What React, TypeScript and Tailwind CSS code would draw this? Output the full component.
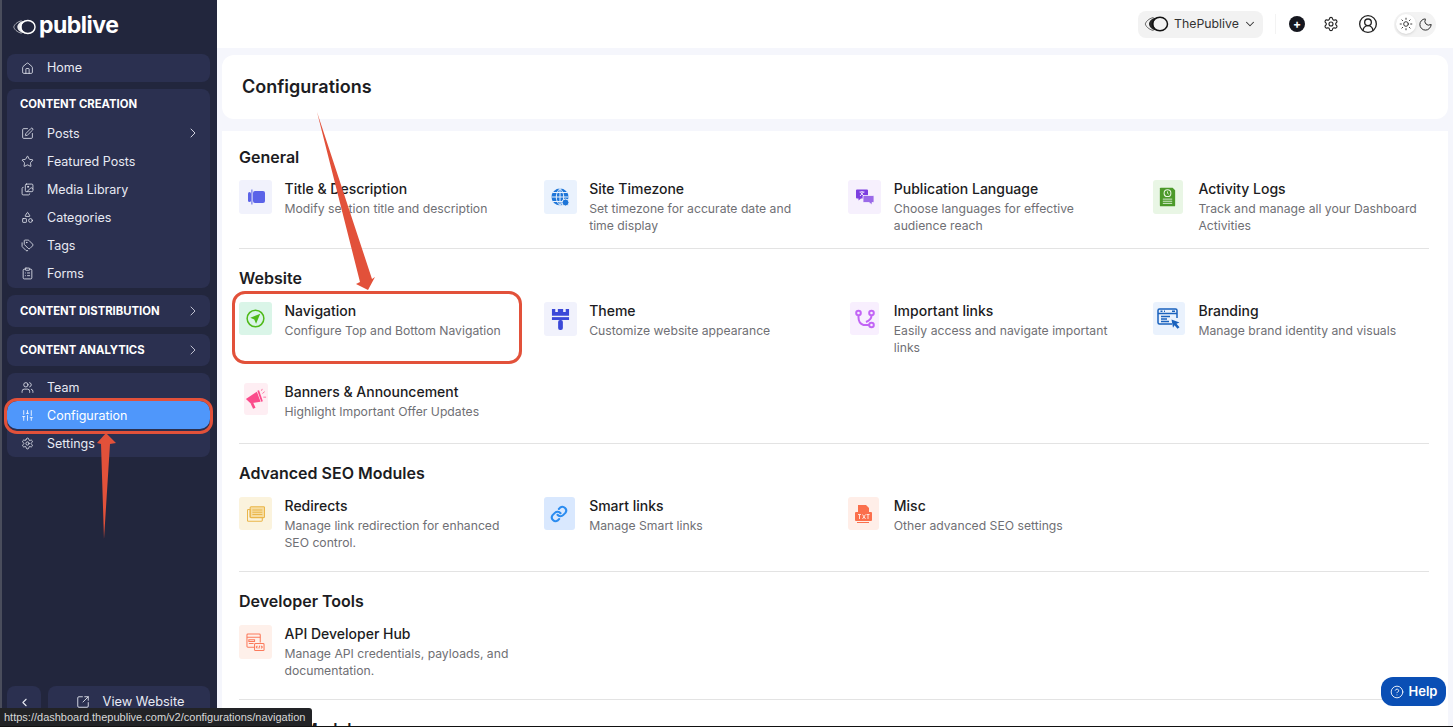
import type { ReactNode } from "react";
import {
  ChevronDown,
  ChevronLeft,
  ChevronRight,
  CircleHelp,
  CircleUserRound,
  ClipboardList,
  House,
  Images,
  Moon,
  Settings,
  Shapes,
  SlidersVertical,
  SquareArrowOutUpRight,
  SquarePen,
  Star,
  Sun,
  Tags,
  Users,
} from "lucide-react";

const font = { fontFamily: "Inter, 'Noto Sans', sans-serif" };

type Item = {
  title: string;
  desc: string;
  box: string;
  icon: ReactNode;
};

/* ---------------- coloured tile icons ---------------- */

const TitleIcon = () => (
  <svg viewBox="0 0 20 20" className="w-[20px] h-[20px]" fill="#5b63e8">
    <rect x="7" y="4" width="12" height="12" rx="2" />
    <rect x="2" y="5" width="3" height="10" rx="1.5" />
    <rect x="5.4" y="2.5" width="1" height="15" />
  </svg>
);
const GlobeIcon = () => (
  <svg viewBox="0 0 20 20" className="w-[20px] h-[20px]">
    <circle cx="10" cy="10" r="8.5" fill="#1f76d8" />
    <path d="M1.5 10h17M10 1.5v17M3 5.5h14M3 14.500h14M10 1.500c-5 5-5 12 0 17M10 1.500c5 5 5 12 0 17" stroke="#eaf2fd" strokeWidth="1" fill="none" />
    <circle cx="15.500" cy="15.500" r="3.500" fill="#1f76d8" stroke="#eaf2fd" />
  </svg>
);
const LanguageIcon = () => (
  <svg viewBox="0 0 20 20" className="w-[20px] h-[20px]">
    <path d="M1 3.500a1 1 0 0 1 1-1h10a1 1 0 0 1 1 1v7a1 1 0 0 1-1 1H6l-2.500 2v-2H2a1 1 0 0 1-1-1z" fill="#7c3fe0" />
    <path d="M8 8.500h10a1 1 0 0 1 1 1v5a1 1 0 0 1-1 1h-1v2.500l-3-2.500H8z" fill="#9a6ae8" stroke="#f6f0fd" strokeWidth="0.8" />
    <path d="M4.500 5h5M7 4v1M5 9l3.500-4M5.500 5.500L9 9" stroke="#f6f0fd" strokeWidth="0.9" fill="none" />
  </svg>
);
const ActivityIcon = () => (
  <svg viewBox="0 0 20 24" className="w-[17px] h-[22px]">
    <path d="M2 1h14l3 3v18a1 1 0 0 1-1 1H2a1 1 0 0 1-1-1V2a1 1 0 0 1 1-1z" fill="#4c9a2a" />
    <circle cx="10" cy="7.500" r="4" fill="none" stroke="#e9f6e5" strokeWidth="1.200" />
    <path d="M10 5.500v2.200l1.500 1M4.500 14.500h11M4.500 17h11M4.500 19.500h11" stroke="#e9f6e5" strokeWidth="1" fill="none" />
  </svg>
);
const NavIcon = () => (
  <svg viewBox="0 0 20 20" className="w-[19px] h-[19px]">
    <circle cx="10" cy="10" r="8.800" fill="none" stroke="#4fba1a" strokeWidth="1.600" />
    <path d="M15 5L4.500 9.200l4.200 1.900 1.900 4.400z" fill="#4fba1a" />
  </svg>
);
const ThemeIcon = () => (
  <svg viewBox="0 0 20 24" className="w-[19px] h-[23px]" fill="#3b49d8">
    <path d="M1 1h3.500v3h2.700V1h5.600v3h2.700V1H19v7H1z" />
    <rect x="1" y="9.500" width="18" height="3" />
    <rect x="7.500" y="12.500" width="5" height="10.500" rx="2" />
  </svg>
);
const LinksIcon = () => (
  <svg viewBox="0 0 20 20" className="w-[20px] h-[20px]" fill="none" stroke="#c264f5" strokeWidth="2">
    <circle cx="3.500" cy="4" r="2.300" />
    <circle cx="16.500" cy="4" r="2.300" />
    <circle cx="16.500" cy="16" r="2.300" />
    <path d="M3.500 6.500v2c0 4 2 6.500 5 7.500h5.500M16.500 6.500c0 3-2 5-5.500 6.500" />
  </svg>
);
const BrandingIcon = () => (
  <svg viewBox="0 0 24 22" className="w-[24px] h-[22px]" fill="none" stroke="#1a62bd" strokeWidth="1.500">
    <path d="M15 16H2.500a1.500 1.500 0 0 1-1.500-1.500v-12A1.500 1.500 0 0 1 2.500 1h16A1.500 1.500 0 0 1 20 2.500V10" />
    <path d="M1 5.500h19" />
    <path d="M3.500 3.300h2M7 3.300h1M15 3.300h3M4 8.500h9M4 11h6M4 13.500h8" />
    <path d="M14.500 11.500l8 3-3 1.200 3 3.500-2 1.500-3-3.500-1.500 2.500z" fill="#1a62bd" stroke="none" />
  </svg>
);
const BannerIcon = () => (
  <svg viewBox="0 0 24 24" className="w-[22px] h-[22px]" fill="#fb4b8b">
    <path d="M1 12l12-8 4 11-11 1.500z" />
    <path d="M13.500 3l1.800-.6 4.200 12-1.800.6z" />
    <path d="M6 16.500l3-.4 2.500 5.400-2.700 1z" />
    <path d="M19 6l2.500-2M20 10h3M18 3l.8-2" stroke="#fb4b8b" strokeWidth="0.800" fill="none" />
  </svg>
);
const RedirectIcon = () => (
  <svg viewBox="0 0 20 20" className="w-[18px] h-[18px]" fill="none" stroke="#eab64a" strokeWidth="1.200">
    <rect x="3.500" y="2" width="16" height="12" rx="1" fill="#f6dca0" />
    <path d="M3.500 14v-9H1.500a1 1 0 0 0-1 1v11a1 1 0 0 0 1 1H16a1 1 0 0 0 1-1v-3" />
    <path d="M6 5.500h11M6 8h11M6 10.500h11" />
  </svg>
);
const SmartIcon = () => (
  <svg viewBox="0 0 24 24" className="w-[18px] h-[18px]" fill="none" stroke="#2b8cf0" strokeWidth="2.800" strokeLinecap="round" strokeLinejoin="round">
    <path d="M10 13a5 5 0 0 0 7.500.5l3-3a5 5 0 0 0-7-7l-1.700 1.700" />
    <path d="M14 11a5 5 0 0 0-7.500-.5l-3 3a5 5 0 0 0 7 7l1.700-1.700" />
  </svg>
);
const MiscIcon = () => (
  <svg viewBox="0 0 20 20" className="w-[20px] h-[20px]">
    <path d="M4 1h8l3 3v5H4z" fill="#fb6f4c" />
    <rect x="1" y="8" width="17" height="9" rx="1" fill="#fb6f4c" />
    <path d="M3 18.500h12" stroke="#fb6f4c" />
    <path d="M4 10.500h3M5.500 10.500v4.500M8.500 10.500l3 4.500M11.500 10.500l-3 4.500M12.500 10.500h3M14 10.500v4.500" stroke="#ffeee8" strokeWidth="0.900" fill="none" />
  </svg>
);
const ApiIcon = () => (
  <svg viewBox="0 0 20 20" className="w-[19px] h-[19px]" fill="none" stroke="#fb7a5c" strokeWidth="1.100">
    <path d="M9 15H2a1 1 0 0 1-1-1V2a1 1 0 0 1 1-1h12a1 1 0 0 1 1 1v8" />
    <path d="M1 4.500h14M3 7h6v2H3zM3 11h5" />
    <rect x="9" y="11" width="10" height="7.500" rx="1" fill="#fef0ea" />
    <path d="M12 13.500l-1.200 1.300 1.200 1.300M16 13.500l1.200 1.300-1.200 1.300M14.500 13.300l-1 3" />
  </svg>
);

/* ---------------- data ---------------- */

const general: Item[] = [
  { title: "Title & Description", desc: "Modify section title and description", box: "w-[33px] h-[34px] bg-[#f1f2fc]", icon: <TitleIcon /> },
  { title: "Site Timezone", desc: "Set timezone for accurate date and\ntime display", box: "w-[33px] h-[34px] bg-[#eaf2fd]", icon: <GlobeIcon /> },
  { title: "Publication Language", desc: "Choose languages for effective\naudience reach", box: "w-[33px] h-[34px] bg-[#f6f0fd]", icon: <LanguageIcon /> },
  { title: "Activity Logs", desc: "Track and manage all your Dashboard\nActivities", box: "w-[30px] h-[34px] bg-[#e9f6e5]", icon: <ActivityIcon /> },
];

const website: Item[] = [
  { title: "Navigation", desc: "Configure Top and Bottom Navigation", box: "w-[33px] h-[33px] bg-[#daf5e8]", icon: <NavIcon /> },
  { title: "Theme", desc: "Customize website appearance", box: "w-[33px] h-[34px] bg-[#f1f2fc]", icon: <ThemeIcon /> },
  { title: "Important links", desc: "Easily access and navigate important\nlinks", box: "w-[29px] h-[33px] ml-[2px] bg-[#f8effe]", icon: <LinksIcon /> },
  { title: "Branding", desc: "Manage brand identity and visuals", box: "w-[32px] h-[33px] bg-[#eaf2fd]", icon: <BrandingIcon /> },
  { title: "Banners & Announcement", desc: "Highlight Important Offer Updates", box: "w-[24px] h-[32px] ml-[5px] bg-[#feeef3]", icon: <BannerIcon /> },
];

const seo: Item[] = [
  { title: "Redirects", desc: "Manage link redirection for enhanced\nSEO control.", box: "w-[33px] h-[33px] bg-[#fbf3dd]", icon: <RedirectIcon /> },
  { title: "Smart links", desc: "Manage Smart links", box: "w-[31px] h-[33px] bg-[#d9e8fe]", icon: <SmartIcon /> },
  { title: "Misc", desc: "Other advanced SEO settings", box: "w-[31px] h-[33px] bg-[#ffeee8]", icon: <MiscIcon /> },
];

const devTools: Item[] = [
  { title: "API Developer Hub", desc: "Manage API credentials, payloads, and\ndocumentation.", box: "w-[33px] h-[34px] bg-[#fef0ea]", icon: <ApiIcon /> },
];

const creation = [
  { label: "Posts", Icon: SquarePen, more: true },
  { label: "Featured Posts", Icon: Star },
  { label: "Media Library", Icon: Images },
  { label: "Categories", Icon: Shapes },
  { label: "Tags", Icon: Tags },
  { label: "Forms", Icon: ClipboardList },
];

/* ---------------- pieces ---------------- */

function Logo({ className = "" }: { className?: string }) {
  return (
    <svg viewBox="0 0 24 16" className={className} fill="none" aria-hidden>
      <path d="M9 1.500C4 2.500 1.200 6 .8 8c.4 2 3.200 5.500 8.200 6.500" stroke="currentColor" strokeWidth="0.900" opacity="0.700" />
      <path d="M13 1.300C6.500 2 4.500 6 4.500 8s2 6 8.500 6.700C9.500 12.500 9 10 9 8s.5-4.500 4-6.700z" fill="currentColor" opacity="0.900" />
      <ellipse cx="15.500" cy="8" rx="7.500" ry="6.800" stroke="currentColor" strokeWidth="1.500" />
    </svg>
  );
}

function NavRow({ label, Icon, active, more, labelClass = "pt-[2px]" }: { label: string; Icon: typeof House; active?: boolean; more?: boolean; labelClass?: string }) {
  return (
    <div className={`flex items-center h-[28px] pl-[14px] pr-[9px] text-[12.500px] text-[#e8eaf3] ${active ? "bg-[#4f97fb] rounded-[10px] text-white" : ""}`}>
      <Icon className="w-[13px] h-[13px] shrink-0" strokeWidth={1.500} />
      <span className={`ml-[13px] flex-1 ${labelClass}`}>{label}</span>
      {more && <ChevronRight className="w-[16px] h-[16px]" strokeWidth={1.300} />}
    </div>
  );
}

function GroupHeader({ label }: { label: string }) {
  return (
    <div className="h-[32px] rounded-[8px] bg-[#2b3050] flex items-center justify-between pl-[13px] pr-[9px] text-[11.300px] font-bold text-white">
      <span className="pt-[1px]">{label}</span>
      <ChevronRight className="w-[16px] h-[16px] text-[#d5d7e3]" strokeWidth={1.300} />
    </div>
  );
}

function Sidebar() {
  return (
    <aside className="w-[217px] shrink-0 h-full bg-[#22263d] border-l-2 border-[#4a4d5c] pl-[5px] pr-[7px] pb-[9px] flex flex-col">
      <div className="h-[54px] flex items-center pl-[6px] text-white">
        <Logo className="w-[23px] h-[16px]" />
        <span className="ml-[3px] text-[23px] font-bold tracking-[-0.5px] leading-none pb-[3px]">publive</span>
      </div>
      <div className="flex flex-col gap-[7px]">
        <div className="rounded-[8px] bg-[#2b3050]">
          <NavRow label="Home" Icon={House} labelClass="" />
        </div>
        <div className="rounded-[8px] bg-[#2b3050] pb-[1px]">
          <div className="h-[30px] flex items-center pl-[13px] pt-[1px] text-[11.300px] font-bold text-white">CONTENT CREATION</div>
          {creation.map((c) => (
            <NavRow key={c.label} label={c.label} Icon={c.Icon} more={c.more} />
          ))}
        </div>
        <GroupHeader label="CONTENT DISTRIBUTION" />
        <GroupHeader label="CONTENT ANALYTICS" />
        <div className="rounded-[8px] bg-[#2b3050]">
          <NavRow label="Team" Icon={Users} />
          <NavRow label="Configuration" Icon={SlidersVertical} active />
          <NavRow label="Settings" Icon={Settings} />
        </div>
      </div>
      <div className="mt-auto flex gap-[7px] h-[32px] text-[#e8eaf3]">
        <div className="w-[34px] rounded-[8px] bg-[#2b3050] flex items-center justify-center">
          <ChevronLeft className="w-[13px] h-[13px]" strokeWidth={2} />
        </div>
        <div className="flex-1 rounded-[8px] bg-[#2b3050] flex items-center justify-center text-[12.800px] gap-[13px] pl-[2px]">
          <SquareArrowOutUpRight className="w-[14px] h-[14px]" strokeWidth={1.500} />
          View Website
        </div>
      </div>
    </aside>
  );
}

function TopBar() {
  return (
    <header className="h-[48px] shrink-0 bg-white flex items-center justify-end pr-[17px]">
      <div className="h-[27px] w-[125px] rounded-[8px] bg-[#f2f2f2] flex items-center pl-[6px] text-[12.300px] text-[#333]">
        <Logo className="w-[25px] h-[16px] text-[#111]" />
        <span className="ml-[5px] flex-1 pt-[1px]">ThePublive</span>
        <ChevronDown className="w-[14px] h-[14px] mr-[6px]" strokeWidth={1.800} />
      </div>
      <div className="w-px h-[20px] bg-[#f3f3f3] ml-[12px]" />
      <div className="ml-[13px] w-[16px] h-[16px] rounded-full bg-[#15171f] flex items-center justify-center text-white text-[12px] font-bold leading-none">
        +
      </div>
      <Settings className="ml-[18px] w-[16px] h-[16px] text-[#222]" strokeWidth={1.700} />
      <CircleUserRound className="ml-[19px] w-[20px] h-[20px] text-[#222]" strokeWidth={1.600} />
      <div className="ml-[16px] h-[25px] w-[42px] rounded-full bg-[#f3f3f3] flex items-center pl-[2px]">
        <div className="w-[20px] h-[20px] rounded-full bg-white shadow flex items-center justify-center">
          <Sun className="w-[14px] h-[14px] text-[#222]" strokeWidth={1.500} />
        </div>
        <Moon className="ml-[2px] w-[15px] h-[15px] text-[#222]" strokeWidth={1.500} />
      </div>
    </header>
  );
}

function ConfigItem({ item }: { item: Item }) {
  return (
    <div className="flex h-[54px]">
      <div className="w-[33px] shrink-0">
        <div className={`rounded-[3px] flex items-center justify-center ${item.box}`}>{item.icon}</div>
      </div>
      <div className="ml-[12.500px]">
        <div className="text-[14px] font-medium leading-[18px] text-[#1c1c22]">{item.title}</div>
        <div className="mt-[2px] text-[12.200px] leading-[17px] text-[#6f6f74] whitespace-pre-line">{item.desc}</div>
      </div>
    </div>
  );
}

function Section({ title, items, className, headingClass = "mb-[12px]" }: { title: string; items: Item[]; className: string; headingClass?: string }) {
  return (
    <section className={`border-b border-[#e3e3e3] ${className}`}>
      <h2 className={`text-[16px] font-semibold leading-[24px] text-[#1c1c22] ${headingClass}`}>{title}</h2>
      <div className="grid grid-cols-4 gap-x-[28.600px] gap-y-[27px]">
        {items.map((it) => (
          <ConfigItem key={it.title} item={it} />
        ))}
      </div>
    </section>
  );
}

export default function App() {
  return (
    <div style={font} className="relative w-[1453px] h-[727px] overflow-hidden flex bg-[#f5f6fc]">
      <Sidebar />
      <div className="flex-1 min-w-0 flex flex-col">
        <TopBar />
        <div className="pl-[5px] pr-[5px] pt-[7px]">
          <div className="h-[64px] rounded-[12px] bg-white flex items-center pl-[20px] pb-[1px] text-[18px] font-semibold text-[#1c1c22]">
            Configurations
          </div>
          <div className="mt-[12px] h-[700px] bg-white pl-[17px] pr-[19px] pt-[14px]">
            <Section title="General" items={general} className="pb-[14px]" headingClass="mb-[11px]" />
            <Section title="Website" items={website} className="pt-[17px] pb-[6px]" />
            <Section title="Advanced SEO Modules" items={seo} className="pt-[17px] pb-[20px]" />
            <Section title="Developer Tools" items={devTools} className="pt-[17px] pb-[20px]" />
            <h2 className="pt-[17px] text-[16px] font-semibold leading-[24px] text-[#1c1c22]">Custom Modules</h2>
          </div>
        </div>
      </div>

      {/* annotation layer */}
      <div className="absolute left-[232px] top-[291px] w-[290px] h-[73px] rounded-[13px] border-[3px] border-[#e2513a]" />
      <div className="absolute left-[4px] top-[398px] w-[209px] h-[36px] rounded-[13px] border-[3px] border-[#e2513a]" />
      <svg className="absolute left-0 top-0 w-[1453px] h-[727px] pointer-events-none" viewBox="0 0 1453 727" fill="#e2513a" aria-hidden>
        <polygon points="317,112 372,279 375,277 368,290 356,284 360,282" />
        <polygon points="104,539 101,444 97,443 106,433 116,443 110,444" />
      </svg>
      <div className="absolute left-[1381px] top-[677px] w-[65px] h-[29px] rounded-[12px] bg-[#0a4fb5] flex items-center justify-center gap-[5px] text-white text-[13px] font-semibold">
        <CircleHelp className="w-[14px] h-[14px]" strokeWidth={1.500} />
        Help
      </div>
      <div className="absolute left-0 top-[708px] w-[312px] h-[18px] rounded-tr-[3px] bg-[#222326] pl-[4px] text-[11px] leading-[18px] text-[#d8d8d8] font-['Liberation_Sans'] whitespace-nowrap">
        https://dashboard.thepublive.com/v2/configurations/navigation
      </div>
      <div className="absolute left-0 bottom-0 w-full h-px bg-[#111]" />
    </div>
  );
}
